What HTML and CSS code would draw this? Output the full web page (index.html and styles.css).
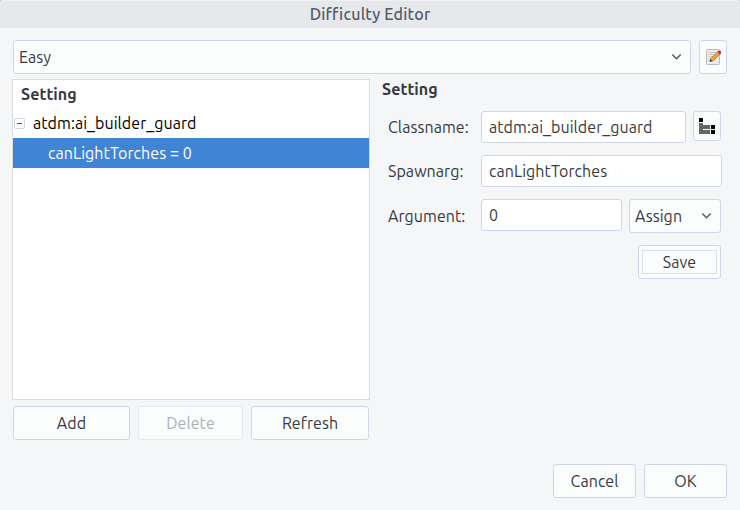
FILE: index.html
```html
<!DOCTYPE html>
<html lang="en">
<head>
<meta charset="utf-8">
<title>Difficulty Editor</title>
<link rel="stylesheet" href="styles.css">
</head>
<body>
<div class="window">
  <header class="titlebar">Difficulty Editor</header>
  <div class="toolbar">
    <div class="box combo level"><span>Easy</span>
      <svg class="chevron" width="12" height="8" viewBox="0 0 12 8"><path d="M2.300 1.500 6.500 5.700 10.700 1.500"/></svg>
    </div>
    <button class="box edit" aria-label="Edit">
      <svg width="18" height="18" viewBox="0 0 18 18">
        <rect x="2.500" y="1.500" width="13" height="15" rx="1" fill="#ececea" stroke="#b9bbb7"/>
        <path d="M4.500 4.500h8M4.500 6.500h6M4.500 8.500h5M4.500 10.500h3M4.500 12.500h2" stroke="#c8c9c7"/>
        <path d="M6 13.500 7.200 10.200 13.500 4 15.800 6.200 9.500 12.500Z" fill="#f4a637" stroke="#a86a20" stroke-width=".8"/>
        <path d="M5.700 13.800 6.600 11.200 8.300 12.900Z" fill="#333"/>
        <path d="m13.200 3.800 1-.9q1.200-.7 2.300.2t.5 2.200l-1 1.100Z" fill="#d92b2b"/>
      </svg>
    </button>
  </div>
  <main class="columns">
    <section class="left">
      <div class="tree">
        <div class="tree-head">Setting</div>
        <div class="row"><i class="expander"></i><span>atdm:ai_builder_guard</span></div>
        <div class="row selected"><span>canLightTorches = 0</span></div>
      </div>
      <div class="actions">
        <button class="box add">Add</button>
        <button class="box delete" disabled>Delete</button>
        <button class="box refresh">Refresh</button>
      </div>
    </section>
    <section class="right">
      <h2>Setting</h2>
      <div class="field"><label>Classname:</label>
        <div class="box input classname">atdm:ai_builder_guard</div>
        <button class="box browse" aria-label="Choose class">
          <svg width="16" height="16" viewBox="0 0 16 16" shape-rendering="crispEdges">
            <path d="M0 5h4v2h7v4H4v1h7v4H0z" fill="#666"/>
            <path d="M0 0h4v4H0zM12 7h4v4h-4zM12 12h4v4h-4z" fill="#000"/>
          </svg>
        </button>
      </div>
      <div class="field"><label>Spawnarg:</label>
        <div class="box input spawnarg">canLightTorches</div>
      </div>
      <div class="field argument"><label>Argument:</label>
        <div class="box input value">0</div>
        <div class="box combo assign"><span>Assign</span>
          <svg class="chevron" width="12" height="8" viewBox="0 0 12 8"><path d="M2.300 1.500 6.500 5.700 10.700 1.500"/></svg>
        </div>
      </div>
      <button class="box save"><span class="focus">Save</span></button>
    </section>
  </main>
  <footer class="footer">
    <button class="box">Cancel</button>
    <button class="box">OK</button>
  </footer>
</div>
</body>
</html>
```
FILE: styles.css
```css
* { box-sizing: border-box; }
body { margin: 0; background: #bcbdbf; }
.window {
  width: 740px; height: 510px; overflow: hidden;
  background: #f5f6f8; border-radius: 3px 3px 0 0;
  font: 16px/20px "Ubuntu", "Noto Sans", sans-serif;
  color: #373a41; white-space: nowrap; letter-spacing: .06px;
}
.titlebar {
  height: 28px; display: flex; align-items: center; justify-content: center;
  background: #e7e8eb; border-top: 1px solid #eff0f2;
  color: #565b6a; font-weight: 500; letter-spacing: .2px;
  padding-bottom: 1px;
}
.box {
  height: 34px; margin: 0; padding: 0; flex: none;
  display: flex; align-items: center; justify-content: center;
  background: #fbfdfd; border: 1px solid #cfd6e6; border-radius: 3px;
  color: inherit; font: inherit; letter-spacing: inherit;
}
.toolbar { display: flex; gap: 8px; padding: 12px 13px 0; }
.combo { justify-content: space-between; padding: 0 8px 0 5px; }
.level { width: 678px; }
.edit { width: 28px; }
.chevron { fill: none; stroke: #5b6070; stroke-width: 1.6; }
.columns { display: flex; padding: 5px 0 0 12px; }
.left { width: 358px; }
.tree { height: 321px; background: #fff; border: 1px solid #dcdcdc; }
.tree-head { height: 28px; display: flex; align-items: center; padding-left: 8px; font-weight: 700; }
.row { height: 30px; display: flex; align-items: center; gap: 8px; padding-left: 1px; color: #000; }
.selected { background: #4084d6; color: #fff; padding-left: 35px; }
.expander {
  width: 11px; height: 11px; display: flex; align-items: center; justify-content: center;
  border: 1px solid #cfd6e6; border-radius: 2px; background: #fff;
}
.expander::before { content: ""; width: 5px; height: 1px; background: #4c4f57; }
.actions { display: flex; gap: 8px; padding: 6px 1px 0; }
.add { width: 117px; }
.delete { width: 105px; border-color: #e3e7f0; color: #adb0b6; }
.refresh { width: 118px; }
.right { width: 352px; padding-left: 12px; }
h2 { margin: 0 0 12px; height: 20px; font-size: 16px; line-height: 20px; }
.field { display: flex; align-items: flex-start; height: 44px; }
label { width: 99px; height: 32px; padding-left: 6px; display: flex; align-items: center; }
.input { height: 32px; background: #fff; justify-content: flex-start; padding-left: 7px; }
.classname { width: 205px; margin-right: 7px; }
.browse { width: 28px; height: 30px; }
.spawnarg { width: 241px; }
.value { width: 141px; margin-right: 7px; }
.assign { width: 92px; }
.argument { height: 46px; }
.argument label { height: 34px; }
.save { width: 83px; margin-left: 256px; }
.focus { width: 75px; height: 24px; border: 1px solid #d9dfec; display: flex; align-items: center; justify-content: center; }
.footer { display: flex; justify-content: flex-end; gap: 8px; padding: 24px 13px 0; }
.footer .box { width: 83px; }
```
